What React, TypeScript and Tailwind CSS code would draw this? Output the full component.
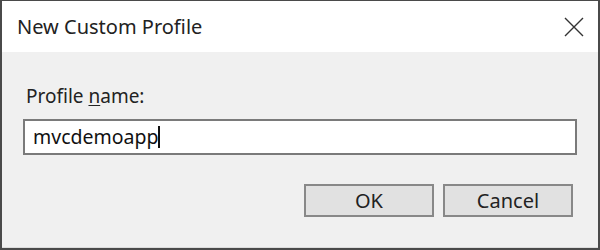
export default function App() {
  return (
    <div className="w-[600px] h-[250px] bg-[#f0f0f0] font-['Segoe_UI','Noto_Sans',sans-serif] text-[#1a1a1a]">
      <div className="w-full h-full border-l-2 border-r-2 border-t border-b-2 border-[#4a4a4a] flex flex-col">
        <div className="h-[51px] bg-white flex items-center justify-between pl-[15px] pr-[14px]">
          <span className="text-[20px] leading-none text-[#222]">New Custom Profile</span>
          <svg width="20" height="20" viewBox="0 0 20 20" className="text-[#333]">
            <path d="M1 1 L19 19 M19 1 L1 19" stroke="currentColor" strokeWidth="1.4" fill="none" />
          </svg>
        </div>
        <div className="flex-1 flex flex-col px-[21px] pt-[35px] border-b border-[#dcdcdc]">
          <label className="pl-[3px] text-[19px] leading-none text-[#222]">
            Profile <span className="underline underline-offset-2">n</span>ame:
          </label>
          <div className="mt-[13px] h-[36px] bg-white border-2 border-[#7a7a7a] flex items-center pl-[8px]">
            <span className="text-[19.5px] leading-none text-[#111]">mvcdemoapp</span>
            <span className="w-[2px] h-[22px] bg-[#111]" />
          </div>
          <div className="mt-[29px] flex justify-end gap-[9px] pr-[4px]">
            <button className="w-[130px] h-[33px] bg-[#e1e1e1] border-2 border-[#888] text-[20px] leading-none text-[#222]">
              OK
            </button>
            <button className="w-[130px] h-[33px] bg-[#e1e1e1] border-2 border-[#888] text-[20px] leading-none text-[#222]">
              Cancel
            </button>
          </div>
        </div>
      </div>
    </div>
  );
}
